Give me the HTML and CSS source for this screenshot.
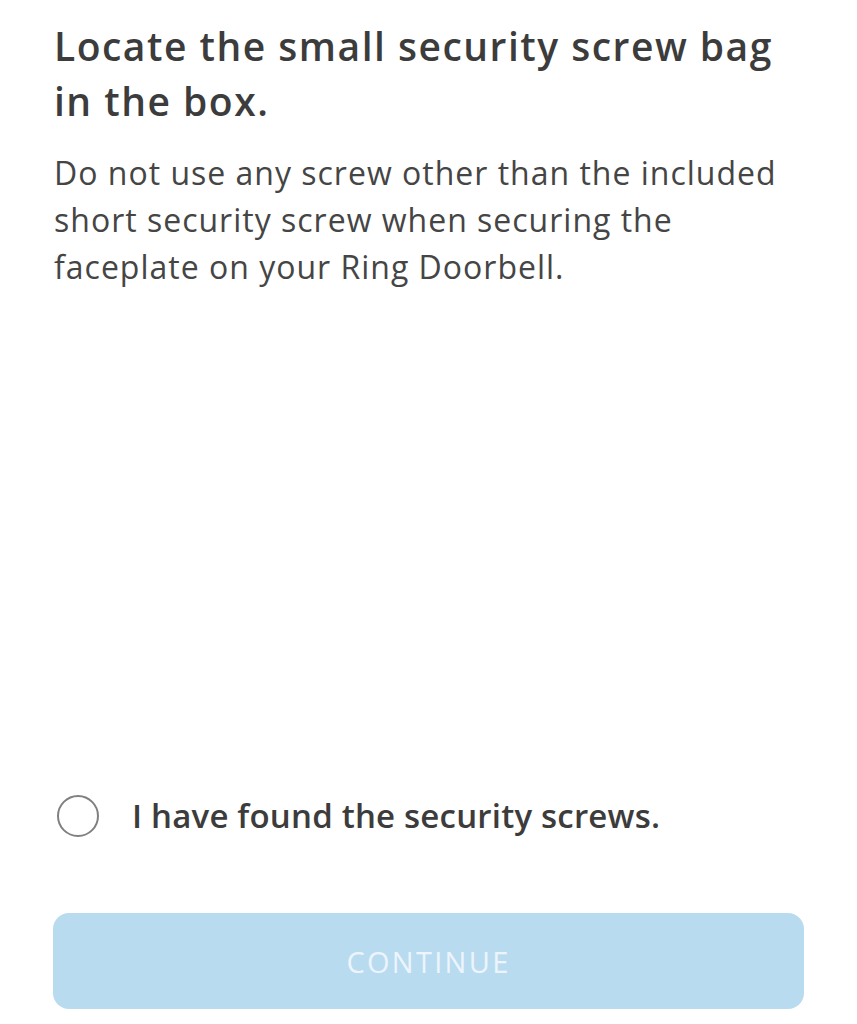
FILE: index.html
```html
<!DOCTYPE html>
<html>
<head>
<meta charset="utf-8">
<link rel="stylesheet" href="styles.css">
</head>
<body>
<main class="screen">
  <section class="intro">
    <h1 class="title">Locate the small security screw bag in the box.</h1>
    <p class="desc">Do not use any screw other than the included short security screw when securing the faceplate on your Ring Doorbell.</p>
  </section>
  <label class="check">
    <span class="radio"></span>
    <span class="check-text">I have found the security screws.</span>
  </label>
  <button class="continue" disabled>CONTINUE</button>
</main>
</body>
</html>
```
FILE: styles.css
```css
html, body {
  margin: 0;
  padding: 0;
  background: #ffffff;
}
.screen {
  width: 857px;
  height: 1024px;
  box-sizing: border-box;
  padding: 18px 53px 15px 54px;
  display: flex;
  flex-direction: column;
  font-family: "Open Sans", Lato, sans-serif;
}
.intro {
  flex: 1;
}
.title {
  margin: 0;
  font-size: 39px;
  line-height: 55px;
  font-weight: 600;
  letter-spacing: 1.5px;
  color: #3c3c3c;
  width: 740px;
}
.desc {
  margin: 21px 0 0;
  font-size: 32px;
  line-height: 47px;
  font-weight: 400;
  letter-spacing: 1px;
  color: #454545;
  width: 740px;
}
.check {
  display: flex;
  align-items: center;
  gap: 33px;
  margin: 0 0 76px 3px;
}
.radio {
  width: 42px;
  height: 42px;
  box-sizing: border-box;
  border: 2px solid #808080;
  border-radius: 50%;
  flex: none;
}
.check-text {
  font-size: 33px;
  line-height: 42px;
  font-weight: 600;
  letter-spacing: 0.2px;
  color: #3c3c3c;
}
.continue {
  width: 751px;
  height: 96px;
  margin-left: -1px;
  border: none;
  border-radius: 16px;
  background: #b9dbf0;
  color: #ecf5fb;
  font-family: "Open Sans", sans-serif;
  font-size: 29px;
  letter-spacing: 2.3px;
  padding: 0;
}
```
